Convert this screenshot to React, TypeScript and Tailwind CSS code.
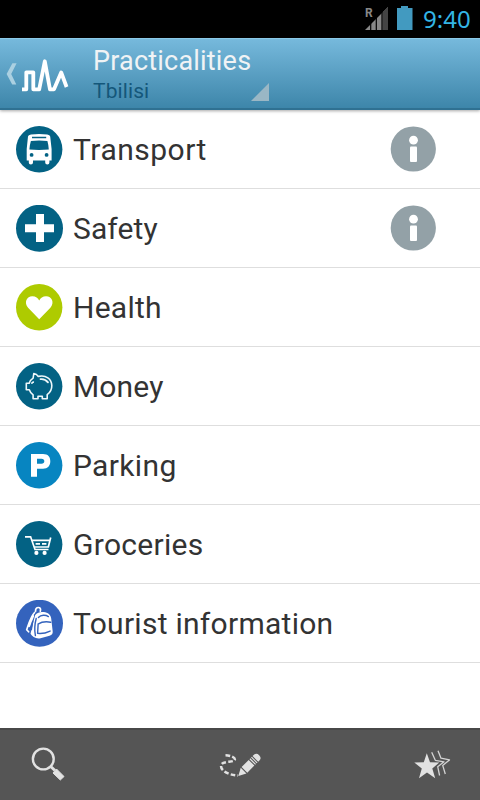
import type { ReactNode } from "react";

interface Item {
  label: string;
  color: string;
  spacing: string;
  icon: ReactNode;
  radius?: number;
  info?: boolean;
}

const BusIcon = () => (
  <>
    <path
      d="M12 10.5Q12.2 8.8 15 8.5Q23 7.5 31.2 8.5Q34 8.8 34.2 10.5L35.6 23V34.5H33.4V36.5Q33.4 38.5 31.3 38.5Q29.2 38.5 29.2 36.5V34.5H17V36.5Q17 38.5 14.9 38.5Q12.8 38.5 12.8 36.5V34.5H10.7V23Z"
      fill="white"
    />
    <path d="M16 10.7H30.2V12.3H16ZM14.9 14.9Q23 14.2 31.4 14.9Q32.6 19 32.8 23.6Q23 24.4 13.4 23.6Q13.6 19 14.9 14.9Z" fill="#036284" />
    <circle cx="15.6" cy="28.9" r="1.9" fill="#036284" />
    <circle cx="30.6" cy="28.9" r="1.9" fill="#036284" />
  </>
);

const PiggyIcon = () => (
  <g fill="none" stroke="#eef7fa" strokeWidth="1.6" strokeLinejoin="round">
    <path d="M17.8 10.5Q20.5 11 22.3 13.4C30 11.5 35.6 16 35.8 22.5C35.9 26.5 34 29.6 31.2 31.6V35.8H26.3V33.3H22V35.8H17.1V31.8Q14.4 30 13.3 26.7H10.3V20.2H13.2Q14 17.2 17.1 15.2Z" />
    <path d="M24.5 16.2Q29 15.6 32 19.4" strokeWidth="1.8" strokeLinecap="round" />
    <path d="M15.8 20.8Q16 18.8 18 19.2" />
  </g>
);

const CartIcon = () => (
  <>
    <g fill="none" stroke="white" strokeWidth="1.7">
      <path d="M9 15.8H14.6L19 28.5H32.5" />
      <path d="M16.2 19.4H33.6M18.4 26H32.6M34.7 16.5L32.2 26.5" />
      <path d="M19.6 22.9H24M26 22.9H30.4" />
    </g>
    <circle cx="20.4" cy="31.9" r="2.1" fill="white" />
    <circle cx="28.6" cy="31.9" r="2.1" fill="white" />
  </>
);

const BackpackIcon = () => (
  <g strokeLinecap="round" strokeLinejoin="round">
    <path
      d="M18.9 16C19.8 12.8 24 11.8 27.8 12C32 12.4 34.8 14.8 35.2 18.6L36.7 31.6C36.9 34 35.8 35.2 33.6 35.7L24.5 38.2C20 39 16.2 37 14.5 33.8Z"
      fill="white"
    />
    <path
      d="M18.6 12.5C14.8 16.3 13 23 10.7 29.7L12.6 31.8M19.6 11.2C19.3 8.8 20.5 7.5 22.3 7.5C24.2 7.5 25 9 24.3 11.2"
      fill="none"
      stroke="white"
      strokeWidth="1.7"
    />
    <path d="M17 16L13 26" stroke="white" strokeWidth="2.2" />
    <path
      d="M20.2 18.5C18.7 24 18.3 30 19.4 35.6M16.6 21.5L15.4 29.5M22.4 17.4C25 14.8 29.6 14.6 32.4 16.6M22 24.2C25.4 22 30.4 21.4 34.7 22.3M22.1 24.7L21.6 33.4C25.6 33.9 30.6 32.8 34.1 31.1"
      fill="none"
      stroke="#3463bd"
      strokeWidth="1.4"
    />
  </g>
);

const items: Item[] = [
  { label: "Transport", color: "#036284", spacing: "tracking-[0.5px]", icon: <BusIcon />, info: true },
  {
    label: "Safety",
    color: "#036284",
    spacing: "tracking-[0.1px]",
    icon: <path d="M20 9H28V19.3H38V27.2H28V37H20V27.2H9V19.3H20Z" fill="white" />,
    radius: 23.5,
    info: true,
  },
  {
    label: "Health",
    color: "#aecb00",
    spacing: "tracking-[0.25px]",
    icon: (
      <path
        d="M23.2 35.2L12.1 23.8C7.6 18.5 10.8 12.3 16.3 12.3C19.8 12.3 22 14 23.2 16.4C24.4 14 26.8 12.3 30.1 12.3C35.7 12.3 38.9 18.5 34.4 23.8Z"
        fill="white"
      />
    ),
  },
  { label: "Money", color: "#036284", spacing: "tracking-[0.15px]", icon: <PiggyIcon /> },
  {
    label: "Parking",
    color: "#0785c1",
    spacing: "tracking-[0.35px]",
    icon: (
      <path
        d="M15 12H27C32 12 34.3 14.8 34.3 19.3C34.3 23.9 31.8 26.7 27 26.7H21V34.8H15ZM21 16.8V21.8H25.5C29.3 21.8 29.3 16.8 25.5 16.8Z"
        fill="white"
        fillRule="evenodd"
      />
    ),
  },
  { label: "Groceries", color: "#036284", spacing: "tracking-[0.3px]", icon: <CartIcon /> },
  {
    label: "Tourist information",
    color: "#3463bd",
    spacing: "tracking-[0.27px]",
    icon: <BackpackIcon />,
    radius: 23.5,
  },
];

const StatusBar = () => (
  <div className="flex h-[38px] shrink-0 items-center justify-end bg-black pr-[10px]">
    <svg width="50" height="38" viewBox="0 0 50 38">
      <path d="M1 30L24 7V30Z" fill="#888" />
      <path d="M18.5 12.5L24 7V30H18.5Z" fill="#444" />
      <path d="M6.7 22V30M12.3 17V30M18 11V30" stroke="black" strokeWidth="1.2" />
      <text x="1" y="17" fontSize="12" fontWeight="700" fontFamily="Roboto, sans-serif" fill="#888">
        R
      </text>
      <path d="M33 8H37V6H44V8H48.5V30H33Z" fill="#429ac0" />
    </svg>
    <span className="ml-[9px] w-[47px] whitespace-nowrap font-['Noto_Sans',sans-serif] text-[24px] leading-[38px] text-[#33b5e5]">
      9:40
    </span>
  </div>
);

const Header = () => (
  <header className="relative z-10 flex h-[72px] shrink-0 border-t border-b-2 border-t-[#8bc9e7] border-b-[#2f7192] bg-linear-to-b from-[#76b9dc] to-[#3d86aa] shadow-[0_1px_3px_rgba(0,0,0,0.35)]">
    <svg width="93" height="69" viewBox="0 0 93 69" fill="none">
      <path d="M12.4 24.2H16.6L11.2 35L16.3 45.5H12.2L6.6 35Z" fill="#abd0e1" />
      <path
        d="M22 50.3H26.3V33.3H33.3V50.3H39.2L44.8 22.3L50 50.3H54L61.2 33.5L66.6 48"
        stroke="white"
        strokeWidth="3.8"
        strokeLinejoin="round"
      />
    </svg>
    <div className="relative w-[176px] pt-[5px]">
      <h1 className="whitespace-nowrap text-[27px] leading-[34px] tracking-[0.2px] text-[#f0f3f5]">Practicalities</h1>
      <p className="text-[21px] leading-[26px] tracking-[0.1px] text-[#14577a]">Tbilisi</p>
      <svg className="absolute right-0 bottom-[7px]" width="18" height="18" viewBox="0 0 18 18">
        <path d="M18 0V18H0Z" fill="#9ab7c5" />
      </svg>
    </div>
  </header>
);

const InfoButton = () => (
  <button className="mr-[44px] ml-auto">
    <svg className="block" width="46" height="46" viewBox="0 0 46 46">
      <circle cx="23.3" cy="23" r="22.6" fill="#93a1a7" />
      <circle cx="23.5" cy="14.2" r="4.4" fill="white" />
      <rect x="20" y="20.6" width="7" height="15.5" rx="1" fill="white" />
    </svg>
  </button>
);

const Row = ({ item }: { item: Item }) => (
  <li className="flex h-[79px] items-center border-b border-[#dedede] pl-4">
    <svg width="47" height="47" viewBox="0 0 47 47">
      <circle cx={item.radius ?? 23.2} cy="23.3" r={item.radius ?? 23.2} fill={item.color} />
      {item.icon}
    </svg>
    <span className={`ml-[10px] pt-[2px] whitespace-nowrap text-[30px] leading-[40px] text-[#333] ${item.spacing}`}>
      {item.label}
    </span>
    {item.info && <InfoButton />}
  </li>
);

const BottomBar = () => (
  <footer className="mt-auto flex h-[72px] shrink-0 items-center justify-between border-t-2 border-[#484848] bg-[#555] px-[28px]">
    <svg width="40" height="40" viewBox="0 0 40 40" fill="none">
      <circle cx="15.3" cy="14" r="10.4" stroke="#e2e2e2" strokeWidth="2.4" />
      <path d="M22.7 21.5L27 25.5" stroke="#e2e2e2" strokeWidth="3" />
      <path d="M28.5 24L36 31.5L32.3 35L25 28Z" fill="#e2e2e2" stroke="#e2e2e2" strokeLinejoin="round" />
    </svg>
    <svg width="44" height="40" viewBox="0 0 44 40" fill="none">
      <path
        d="M7.5 10.3C12 10.3 17.5 12.5 16.8 14.8C15.8 17.8 3 15.5 3 21C3 26 11 30 20 30.6"
        stroke="#e2e2e2"
        strokeWidth="2.5"
        strokeDasharray="4.6 2.2"
      />
      <g transform="translate(20.3 31) rotate(-45)" fill="#e2e2e2">
        <path d="M0 0L7.5 -4V4Z" />
        <path d="M8.7 -4H18.7V4H8.7ZM19.8 -4H21V4H19.8ZM22 -4H23.2V4H22ZM24.2 -4H26.5Q29.5 -3.5 29.5 0Q29.5 3.5 26.5 4H24.2Z" />
      </g>
    </svg>
    <svg width="40" height="40" viewBox="0 0 40 40" fill="none">
      <path
        d="M14.8 8.3L18 17.2L27.2 17.6L20.3 23.4L23.2 33.2L15 27.5L7 33.2L9.8 23.4L2.3 17.6L11.8 17.2Z"
        fill="#e2e2e2"
      />
      <path
        d="M19.7 7.3L23.3 15.3L32 16.8L25.7 21.7L27.6 30.5M26 5.7L29 13.2L37.5 14.9L30.7 20.4L33.3 29"
        stroke="#d4d4d4"
        strokeWidth="1.3"
        strokeLinejoin="round"
      />
    </svg>
  </footer>
);

const App = () => (
  <div className="flex h-[800px] w-[480px] flex-col overflow-hidden bg-white font-[Roboto,sans-serif]">
    <StatusBar />
    <Header />
    <ul>
      {items.map((item) => (
        <Row key={item.label} item={item} />
      ))}
    </ul>
    <BottomBar />
  </div>
);

export default App;
